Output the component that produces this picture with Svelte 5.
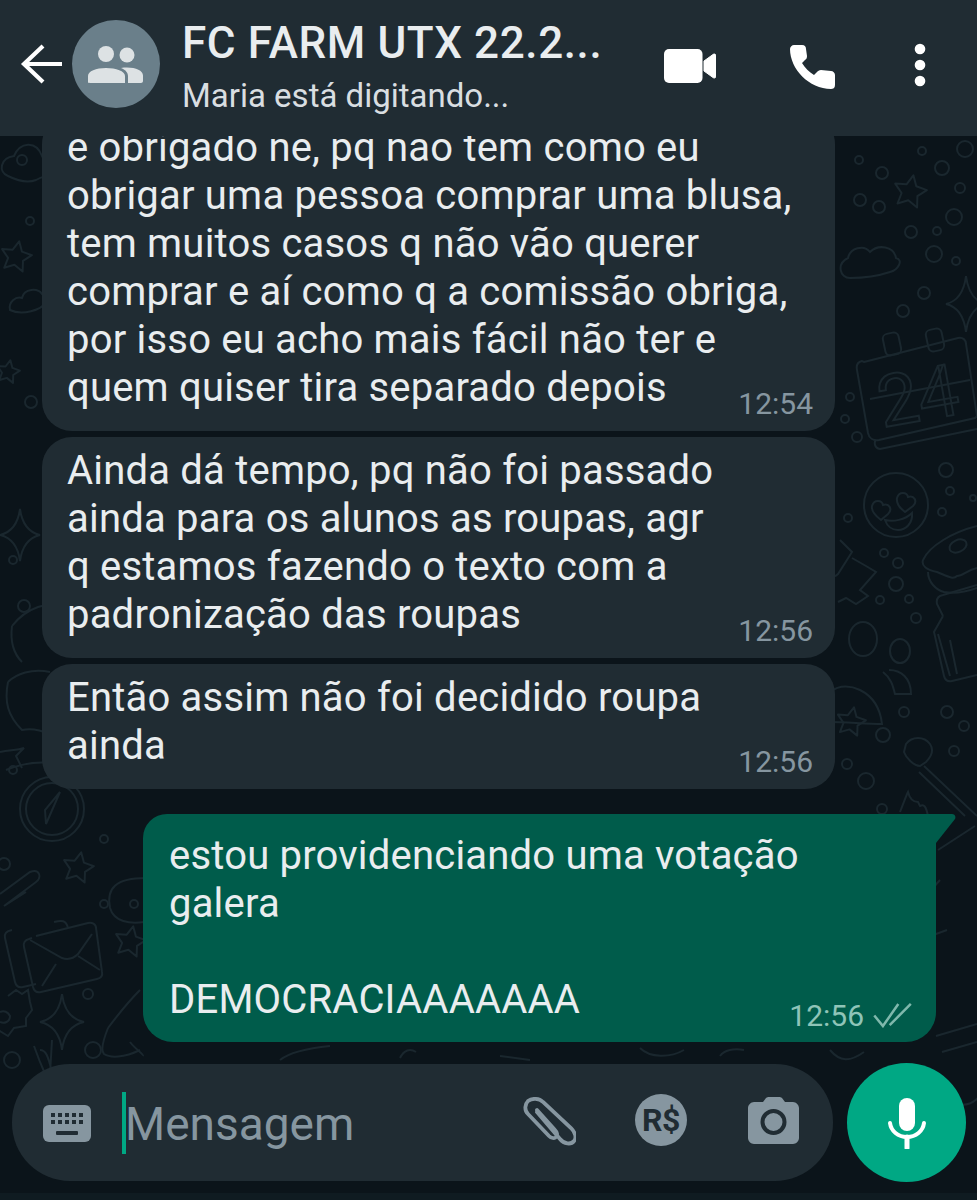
<script>
	const messages = [
		{ text: 'e obrigado ne, pq nao tem como eu\nobrigar uma pessoa comprar uma blusa,\ntem muitos casos q não vão querer\ncomprar e aí como q a comissão obriga,\npor isso eu acho mais fácil não ter e\nquem quiser tira separado depois', time: '12:54' },
		{ text: 'Ainda dá tempo, pq não foi passado\nainda para os alunos as roupas, agr\nq estamos fazendo o texto com a\npadronização das roupas', time: '12:56' },
		{ text: 'Então assim não foi decidido roupa\nainda', time: '12:56' }
	];

	// wallpaper bits, in page coordinates
	const rings = [
		[882,173,6],[860,200,6],[879,207,6],[911,232,6],[937,231,4],[934,254,8],[956,261,4],[954,217,8],[960,188,5],[942,168,7],[922,151,4],[965,149,8],[859,160,4],
		[924,293,6],[903,311,6],[850,397,4],[845,419,4],[857,437,5],[946,470,7],[950,491,4],[973,498,3],[942,512,4],[848,518,4],[884,553,4],[898,563,5],[896,584,7],[880,600,4],[909,599,4],[916,618,5],
		[904,712,5],[947,712,6],[964,726,5],[954,751,5],[883,735,7],[847,764,5],[866,781,8],[882,809,5],[104,839,4],[4,864,6],[104,904,4],[134,904,4],[88,994,5],[93,1050,8],[12,1060,8],
		[31,402,6],[30,221,4],[24,606,6],[13,560,4],[13,770,4],[22,160,5]
	];
	const stars = [[910,192,17],[78,868,16],[130,942,16],[851,722,15],[16,257,16],[8,372,12]];
	const sparkles = [[966,304,20,28],[62,1022,22,28],[20,535,20,26]];

	function star(cx, cy, r) {
		let pts = [];
		for (let i = 0; i < 10; i++) {
			const a = -Math.PI / 2 + 0.2 + (i * Math.PI) / 5;
			const d = i % 2 ? r * 0.5 : r;
			pts.push((cx + d * Math.cos(a)).toFixed(1) + ',' + (cy + d * Math.sin(a)).toFixed(1));
		}
		return pts.join(' ');
	}

	function sparkle(x, y, w, h) {
		return `M${x} ${y - h}Q${x + 3} ${y - 4} ${x + w} ${y}Q${x + 3} ${y + 4} ${x} ${y + h}Q${x - 3} ${y + 4} ${x - w} ${y}Q${x - 3} ${y - 4} ${x} ${y - h}Z`;
	}
</script>

<div class="screen">
	<header class="topbar">
		<svg class="back" viewBox="0 0 42 40" width="42" height="40" fill="none" stroke="#fff" stroke-width="4.200">
			<path d="M42 20H4M23 2 4 20l19 18" />
		</svg>
		<div class="avatar">
			<svg viewBox="0 0 55 37" width="55" height="37" fill="#dde2e4">
				<circle cx="18" cy="8" r="8" />
				<circle cx="39" cy="9" r="7.500" />
				<path d="M0 37v-7c0-5 8-8 18-8s19 3 19 8v7H2c-1 0-2-.5-2 0Z" />
				<path d="M40 37v-7c0-3-2-6-7-8 2-.4 4-.5 6-.5 9 0 16 3 16 8V35c0 1-1 2-2 2Z" />
			</svg>
		</div>
		<div class="who">
			<div class="title">FC FARM UTX 22.2...</div>
			<div class="status">Maria está digitando...</div>
		</div>
		<svg class="video" viewBox="0 0 52 34" width="52" height="34" fill="#fff">
			<rect x="0" y="0" width="38.500" height="34" rx="5" />
			<path d="M40 12 49 5.500c1-1 3-.5 3 1.500v20c0 2-2 2.500-3 1.500L40 22Z" stroke="#fff" stroke-linejoin="round" />
		</svg>
		<svg class="phone" viewBox="0 0 45 44" width="45" height="44" fill="#fff">
			<path d="M4 0h8c3 0 4 2 4 4l1 7c0 2-.5 3-2 4l-3 3c3 5 7 9 12 12l3-3c1-1 2-2 4-2l10 1c2 0 4 2 4 4v10c0 3-2 4-4 4C19 44 0 24 0 4 0 2 2 0 4 0Z" />
		</svg>
		<svg class="dots" viewBox="0 0 12 44" width="12" height="44" fill="#fff">
			<circle cx="6" cy="6" r="5.300" />
			<circle cx="6" cy="22" r="5.300" />
			<circle cx="6" cy="38" r="5.300" />
		</svg>
	</header>

	<main class="chat">
		<svg class="wallpaper" viewBox="0 136 977 1057" width="977" height="1057" fill="none" stroke="#1a272e" stroke-width="2">
			{#each rings as r}
				<circle cx={r[0]} cy={r[1]} r={r[2]} />
			{/each}
			{#each stars as s}
				<polygon points={star(s[0], s[1], s[2])} stroke-linejoin="round" />
			{/each}
			{#each sparkles as s}
				<path d={sparkle(s[0], s[1], s[2], s[3])} />
			{/each}

			<!-- cloud -->
			<path d="M850 278c-10 0-14-14-2-20 2-10 16-14 22-6 8-8 24-6 26 6 8 2 2 12-6 14-12 4-28 6-40 6Z" />
			<path d="M8 176c-10-4-8-18 6-20 6-14 22-16 28 0 4-4 14 0 14 10 0 10-10 8-20 14-10 4-20 0-28-4Z" />
			<path d="M10 310c-2-8 6-14 12-12 2-10 16-10 20-4 4-2 8 2 4 8-4 8-24 14-36 8Z" />
			<path d="M146 878c-30 0-40 10-36 30 4 14 20 16 34 14" />

			<!-- calendar -->
			<path d="M864 362 958 338c5-1 8 2 8 6l11 72-2 2-96 22c-6 1-10-2-11-7l-11-63c-1-5 1-8 5-9Z" />
			<path d="M876 440c-2 2-2 8 4 9l97-20" />
			<rect x="884" y="333" width="16" height="22" rx="5" transform="rotate(-12 892 344)" />
			<rect x="927" y="329" width="16" height="22" rx="5" transform="rotate(-12 935 340)" />
			<path d="M870 399 970 380" />
			<text x="878" y="424" font-family="Roboto, sans-serif" font-size="72" transform="rotate(-10 900 400)">24</text>

			<!-- heart eyes -->
			<circle cx="896" cy="505" r="32" />
			<path d="M872 506c2-7 10-6 11-1 6-2 10 4 5 9l-7 6c-4-3-10-8-9-14ZM897 498c2-7 10-6 11-1 6-2 10 4 5 9l-8 6c-4-3-9-8-8-14Z" />
			<path d="M885 520c8 2 20 0 27-7 1 10-6 17-14 17-6 0-11-4-13-10Z" />

			<!-- donut -->
			<path d="M923 560c6-14 30-28 54-34M923 560c-2 6 4 10 14 12 10 4 16 8 20 4 6 0 10-6 20-8M928 572c0 10 8 18 16 20 10 2 22 0 33-4" />
			<ellipse cx="958" cy="546" rx="9" ry="6" transform="rotate(-25 958 546)" />

			<!-- newspaper -->
			<path d="M943 616l-6-12c-1-5 1-8 6-9l34-10M943 616 934 632l10 44c1 4 4 6 8 5l25-6M938 634l12 42M950 640l7 34" />

			<!-- key and people -->
			<path d="M840 540 852 552 838 574c-3 3-6 3-8 0M852 558 866 566 876 572 860 590 868 596 856 604 846 598 838 602" />
			<ellipse cx="863" cy="639" rx="14" ry="17" />
			<ellipse cx="900" cy="651" rx="10" ry="12" />
			<path d="M830 692c10-8 22-6 30-2 12 6 20 16 22 34-16 0-36-2-52-2M889 670c12 0 22 8 22 24l-16 0c-2-8-4-16-12-22" />

			<!-- brush and flame -->
			<path d="M906 744c6-8 18-8 24 0 4 6 2 12-4 18l-6 4c-6 0-14-8-16-14ZM924 766l53 50M919 772l46 44" />
			<path d="M900 812c4-10 6-16 8-20 2 8 6 10 10 10l2 4c4-2 6 0 8 10" />

			<!-- left side: compass, clip, mail -->
			<circle cx="52" cy="809" r="32" />
			<circle cx="52" cy="809" r="26" />
			<path d="M60 792 46 824l-1-14Z" />
			<path d="M0 894 30 872c10-4 12 6 6 10L4 906l22-14" />
			<path d="M54 922c8-2 12-2 14 6" />
			<path d="M12 930c-6 1-8 4-7 8l10 44c1 4 4 6 8 5l13-3" />
			<path d="M36 936 88 923c4-1 8 1 8 5l6 44c1 4-1 6-5 7l-56 13c-4 1-7-1-8-5l-9-40c-1-4 1-7 5-8l3-1" />
			<path d="M30 940 62 958c6 2 12 0 16-4l14-20M42 986 56 964M78 956 100 970" />
			<path d="M8 996 16 990l6 4 6-4 2 12 2 8-6 8 0 8-12 2-6 8-10-6M0 1012c4-2 8 0 10 4 0 6-6 8-10 6" />
			<path d="M108 1028c12-16 24-30 32-38M108 1028c-4 10-8 22-4 26 6 4 20 4 36-4M130 1042c6 8 14 12 13 14" />
			<path d="M34 1046l6 16 6 14M40 1050c6 0 8 6 12 22M52 1040l-2 34" />

			<!-- left side: plane, balloons, flower -->
			<path d="M12 626c14-18 36-26 58-20M12 626c-2 16 2 28 10 36M8 682c8-8 24-14 42-10M8 682c-4 20 0 34 14 48 10-2 24 0 36 10" />
			<path d="M6 770c20-8 40-10 60-4" />
			<path d="M0 752c12-2 18-2 24-4l-8 8 6 12" />

			<!-- other bits -->
			<path d="M855 860 877 862 888 850 880 872 892 892M858 850l-2 44" />
			<path d="M938 850 975 826M905 900c-3 0-6-4-4-10l30-38M940 880l-16 18" />
			<path d="M908 936 926 889c2-5 8-3 7 2l-18 44c-2 4-8 3-7-1ZM925 938 947 930" />
			<path d="M936 1036 977 1024M942 1052l35-10M978 1098c-6 6-14 8-22 6" />
			<path d="M280 1060c10-8 30-12 50-14M400 1058c4-8 10-10 16-6M500 1056l30 4M640 1048c10 10 30 10 44 2M720 1056c4-6 14-8 24-6M830 1050c10 12 20 12 34 2" />
		</svg>

		<div class="messages">
			{#each messages as m}
				<div class="bubble in">
					<div class="text">{m.text}</div>
					<div class="meta">{m.time}</div>
				</div>
			{/each}

			<div class="bubble out">
				<svg class="tail" viewBox="0 0 20 29" width="20" height="29" fill="#005c4b">
					<path d="M0 0H16c3 0 4 3 3 5L0 29Z" />
				</svg>
				<div class="text">estou providenciando uma votação
galera

DEMOCRACIAAAAAAA</div>
				<div class="meta">
					12:56
					<svg viewBox="0 0 42 26" width="41" height="25" fill="none" stroke="#7fb8ac" stroke-width="2.600">
						<path d="M1 13 10 24 26 1M17 23 39 1" />
					</svg>
				</div>
			</div>
		</div>

		<div class="composer">
			<div class="field">
				<svg class="kbd" viewBox="0 0 48 37" width="48" height="37">
					<rect width="48" height="37" rx="6" fill="#8696a0" />
					<g fill="#202c33">
						<rect x="8" y="8" width="4" height="4" /><rect x="15" y="8" width="4" height="4" /><rect x="22" y="8" width="4" height="4" /><rect x="29" y="8" width="4" height="4" /><rect x="36" y="8" width="4" height="4" />
						<rect x="8" y="15" width="4" height="4" /><rect x="15" y="15" width="4" height="4" /><rect x="22" y="15" width="4" height="4" /><rect x="29" y="15" width="4" height="4" /><rect x="36" y="15" width="4" height="4" />
						<rect x="13" y="26" width="22" height="4" rx="1" />
					</g>
				</svg>
				<div class="caret"></div>
				<div class="placeholder">Mensagem</div>
				<svg class="clip" viewBox="0 0 54 50" width="54" height="50" fill="none" stroke="#8696a0" stroke-width="3.800" stroke-linecap="round">
					<path d="M15 15 38 42c4 5 11 6 14 2 3-3 1-9-3-13L21 5c-4-4-11-4-15-1-3 3-4 9 0 13l21 22c2 2 6 3 7 1 2-2 1-5-1-7L15 13" />
				</svg>
				<div class="pay">R$</div>
				<svg class="cam" viewBox="0 0 51 47" width="51" height="47">
					<path d="M6 5h9l3-4c1-1 2-1 3-1h10c1 0 2 0 3 1l3 4h8c3 0 6 3 6 6v30c0 3-3 6-6 6H6c-3 0-6-3-6-6V11c0-3 3-6 6-6Z" fill="#8696a0" />
					<circle cx="25.500" cy="25" r="11" fill="none" stroke="#202c33" stroke-width="4" />
				</svg>
			</div>
			<div class="mic">
				<svg viewBox="0 0 40 52" width="40" height="52" fill="none" stroke="#fff">
					<rect x="12" y="1" width="16" height="33" rx="8" fill="#fff" stroke="none" />
					<path d="M3 26c1 8 8 14 17 14s16-6 17-14" stroke-width="4" stroke-linecap="round" />
					<path d="M20 40v11" stroke-width="5" stroke-linecap="round" />
				</svg>
			</div>
		</div>
	</main>

	<div class="navstrip"></div>
</div>

<style>
	:global(body) {
		background: #0b141a;
	}

	.screen {
		display: flex;
		flex-direction: column;
		width: 977px;
		height: 1200px;
		overflow: hidden;
		font-family: Roboto, 'Noto Sans', sans-serif;
	}

	.topbar {
		display: flex;
		align-items: center;
		flex: none;
		height: 136px;
		background: #202c33;
		position: relative;
		z-index: 2;
		color: #e9edef;
	}

	.back {
		margin: -8px 0 0 20px;
		flex: none;
	}

	.avatar {
		display: flex;
		align-items: center;
		justify-content: center;
		flex: none;
		width: 88px;
		height: 88px;
		margin: -8px 0 0 10px;
		border-radius: 50%;
		background: #6a7f8a;
	}

	.avatar svg {
		margin-left: -1px;
	}

	.who {
		width: 482px;
		margin: -2px 0 0 22px;
		flex: none;
		white-space: nowrap;
	}

	.title {
		font-size: 44px;
		font-weight: 500;
		line-height: 50px;
		letter-spacing: 0.6px;
	}

	.status {
		font-size: 33px;
		line-height: 42px;
		margin-top: 7px;
		color: #d9dee1;
	}

	.video {
		flex: none;
		margin-top: -4px;
	}

	.phone {
		flex: none;
		margin: -2px 0 0 74px;
	}

	.dots {
		flex: none;
		margin: -6px 0 0 79px;
	}

	.chat {
		position: relative;
		flex: 1;
		min-height: 0;
		display: flex;
		flex-direction: column;
		justify-content: flex-end;
		overflow: hidden;
		background: #0b141a;
	}

	.wallpaper {
		position: absolute;
		top: 0;
		left: 0;
	}

	.messages {
		position: relative;
		display: flex;
		flex-direction: column;
		gap: 6px;
		flex: none;
	}

	.bubble {
		display: flex;
		flex-direction: column;
		position: relative;
		color: #e9edef;
	}

	.in {
		width: 793px;
		margin-left: 42px;
		padding: 10px 22px 19px 25px;
		box-sizing: border-box;
		background: #202c33;
		border-radius: 30px;
	}

	.out {
		width: 793px;
		margin: 19px 0 0 143px;
		padding: 18px 22px 18px 26px;
		box-sizing: border-box;
		background: #005c4b;
		border-radius: 0 0 30px 30px;
		border-top-left-radius: 24px;
	}

	.tail {
		position: absolute;
		top: 0;
		left: 100%;
	}

	.text {
		font-size: 40px;
		line-height: 48px;
		white-space: pre-line;
		letter-spacing: 0.2px;
	}

	.meta {
		display: flex;
		align-items: center;
		gap: 9px;
		align-self: flex-end;
		margin: -27px 0 -9px;
		height: 36px;
		font-size: 30px;
		color: #8696a0;
	}

	.out .meta {
		color: #8fc4b8;
	}

	.composer {
		position: relative;
		display: flex;
		align-items: center;
		flex: none;
		margin: 21px 0 11px 12px;
	}

	.field {
		display: flex;
		align-items: center;
		width: 821px;
		height: 117px;
		flex: none;
		border-radius: 58px;
		background: #202c33;
	}

	.kbd {
		flex: none;
		margin: 2px 0 0 31px;
	}

	.caret {
		flex: none;
		width: 4px;
		height: 62px;
		margin-left: 31px;
		background: #00a884;
	}

	.placeholder {
		flex: none;
		width: 397px;
		margin-left: -1px;
		font-size: 46px;
		color: #8696a0;
		margin-top: 2px;
	}

	.clip {
		flex: none;
		margin-top: -2px;
	}

	.pay {
		display: flex;
		align-items: center;
		justify-content: center;
		flex: none;
		width: 52px;
		height: 52px;
		margin-left: 59px;
		margin-top: -5px;
		border-radius: 50%;
		background: #8696a0;
		color: #202c33;
		font-size: 32px;
		font-weight: 700;
		letter-spacing: -0.5px;
	}

	.cam {
		flex: none;
		margin-left: 61px;
		margin-top: -4px;
	}

	.mic {
		display: flex;
		align-items: center;
		justify-content: center;
		flex: none;
		width: 119px;
		height: 119px;
		margin-left: 14px;
		border-radius: 50%;
		background: #00a884;
	}

	.navstrip {
		flex: none;
		height: 7px;
		background: #0f1b21;
	}
</style>
